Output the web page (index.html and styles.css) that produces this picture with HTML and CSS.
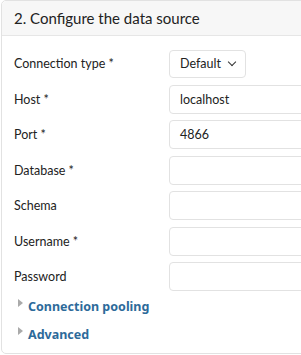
FILE: index.html
```html
<!DOCTYPE html>
<html lang="en">
<head>
    <meta charset="UTF-8">
    <title>Configure the data source</title>
    <link rel="stylesheet" href="styles.css">
</head>
<body>
    <div class="card">
        <div class="card-header">2. Configure the data source</div>
        <div class="card-body">
            <div class="field">
                <label>Connection type *</label>
                <div class="select">Default <span class="chevron"></span></div>
            </div>
            <div class="field">
                <label>Host *</label>
                <div class="input">localhost</div>
            </div>
            <div class="field">
                <label>Port *</label>
                <div class="input">4866</div>
            </div>
            <div class="field">
                <label>Database *</label>
                <div class="input"></div>
            </div>
            <div class="field">
                <label>Schema</label>
                <div class="input"></div>
            </div>
            <div class="field">
                <label>Username *</label>
                <div class="input"></div>
            </div>
            <div class="field">
                <label>Password</label>
                <div class="input"></div>
            </div>
            <details class="section"><summary>Connection pooling</summary></details>
            <details class="section"><summary>Advanced</summary></details>
        </div>
    </div>
</body>
</html>
```

FILE: styles.css
```css
* {
    margin: 0;
    padding: 0;
    box-sizing: border-box;
}

html, body {
    overflow: hidden;
}

body {
    font-family: Lato, "Noto Sans", sans-serif;
    color: #222;
    background: white;
    padding: 0 0 0 1px;
    width: 301px;
}

.card {
    width: 340px;
    border: 1px solid #e2e2e2;
    border-radius: 5px;
    height: 354px;
}

.card-header {
    background: #f7f7f7;
    border-bottom: 1px solid #e6e6e6;
    height: 35px;
    padding: 0 12px;
    line-height: 34px;
    font-size: 15px;
    color: #222;
    border-radius: 5px 5px 0 0;
}

.card-body {
    padding: 13px 12px 0 12px;
}

.field {
    display: flex;
    align-items: center;
    height: 29px;
    margin-bottom: 6.5px;
}

.field:last-of-type {
    margin-bottom: 1px;
}

.field label {
    width: 155px;
    font-size: 12.5px;
}

.select {
    display: flex;
    align-items: center;
    gap: 8px;
    height: 28px;
    padding: 0 10px;
    border: 1px solid #e2e2e2;
    border-radius: 4px;
    font-size: 12.5px;
}

.chevron {
    width: 6px;
    height: 6px;
    border-right: 1.3px solid #333;
    border-bottom: 1.3px solid #333;
    transform: translateY(-2px) rotate(45deg);
}

.input {
    flex: 1;
    height: 29px;
    line-height: 27px;
    padding: 0 10px;
    border: 1px solid #e2e2e2;
    border-radius: 4px;
    font-size: 12.5px;
}

.section summary {
    list-style: none;
    display: flex;
    align-items: center;
    gap: 5px;
    padding-left: 4px;
    height: 28px;
    font-family: "Noto Sans", sans-serif;
    font-size: 12.5px;
    font-weight: bold;
    color: #2d6a9a;
    cursor: pointer;
}

.section summary::before {
    content: "";
    border-left: 5px solid #aaa;
    border-top: 4px solid transparent;
    border-bottom: 4px solid transparent;
    transform: translateY(-3px);
}
```
